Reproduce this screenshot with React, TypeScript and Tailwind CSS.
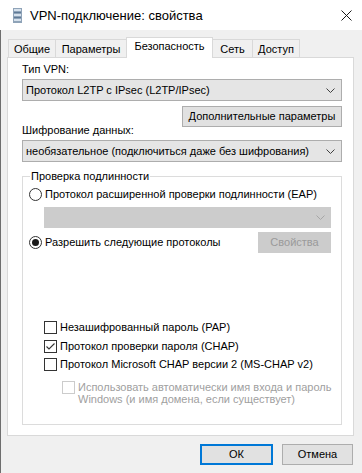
import React from "react";

function Chevron({ color = "#404040" }: { color?: string }) {
  return (
    <svg width="9" height="5" viewBox="0 0 9 5">
      <path d="M0.5 0.5 L4.5 4.5 L8.5 0.5" fill="none" stroke={color} strokeWidth="1" />
    </svg>
  );
}

function Combo({ text, disabled }: { text?: string; disabled?: boolean }) {
  return (
    <div
      className={
        disabled
          ? "flex h-[21px] items-center justify-end border border-[#cccccc] bg-[#cccccc] pr-[5px]"
          : "flex h-[22px] items-center justify-between border border-[#adadad] bg-[#e5e5e5] pl-[3px] pr-[6px]"
      }
    >
      {text && <span className="whitespace-nowrap">{text}</span>}
      <Chevron color={disabled ? "#a6a6a6" : "#404040"} />
    </div>
  );
}

function Radio({ checked }: { checked?: boolean }) {
  return (
    <span className="flex h-[13px] w-[13px] shrink-0 items-center justify-center rounded-full border border-[#333333] bg-white">
      {checked && <span className="h-[7px] w-[7px] rounded-full bg-[#1a1a1a]" />}
    </span>
  );
}

function Check({ checked, disabled }: { checked?: boolean; disabled?: boolean }) {
  return (
    <span
      className={
        disabled
          ? "flex h-[13px] w-[13px] shrink-0 border border-[#cccccc] bg-white"
          : "flex h-[13px] w-[13px] shrink-0 items-center justify-center border border-[#333333] bg-white"
      }
    >
      {checked && (
        <svg width="11" height="11" viewBox="0 0 11 11">
          <path d="M1.5 5.5 L4 8 L9.5 2.5" fill="none" stroke="#333333" strokeWidth="1.1" />
        </svg>
      )}
    </span>
  );
}

function Tab({ label, w, active }: { label: string; w: string; active?: boolean }) {
  if (active) {
    return (
      <div className={`relative z-10 -mb-px -ml-px flex h-[21px] justify-center whitespace-nowrap border border-b-0 border-[#d9d9d9] bg-white pt-[1px] ${w}`}>
        {label}
      </div>
    );
  }
  return (
    <div className={`-ml-px flex h-[18px] justify-center whitespace-nowrap border border-b-0 border-[#d9d9d9] bg-[#f0f0f0] pt-[2px] first:ml-0 ${w}`}>
      {label}
    </div>
  );
}

export default function App() {
  return (
    <div className="h-[473px] w-[362px] overflow-hidden bg-[#f0f0f0] font-['Liberation_Sans',Arial,sans-serif] text-[11px] leading-[15px] text-black">
      {/* title bar */}
      <div className="flex h-[30px] items-center bg-white pl-[13px]">
        <svg width="9" height="15" viewBox="0 0 9 15">
          <rect x="0" y="0" width="9" height="15" fill="#8fa3b8" />
          <rect x="1" y="1" width="7" height="2" fill="#d6e1ec" />
          <rect x="1" y="4" width="7" height="1" fill="#5f7a96" />
          <rect x="1" y="6" width="7" height="2" fill="#d6e1ec" />
          <rect x="1" y="9" width="7" height="1" fill="#5f7a96" />
          <rect x="1" y="11" width="7" height="2" fill="#d6e1ec" />
        </svg>
        <span className="ml-[8px] text-[13px]">VPN-подключение: свойства</span>
        <svg className="ml-auto mr-[10px]" width="11" height="11" viewBox="0 0 11 11">
          <path d="M0.5 0.5 L10.5 10.5 M10.5 0.5 L0.5 10.5" stroke="#1a1a1a" strokeWidth="1" />
        </svg>
      </div>

      {/* body */}
      <div className="flex h-[443px] flex-col border-l border-[#6e6e6e] pl-[6px] pr-[8px]">
        <div className="ml-[1px] mt-[7px] flex h-[20px] items-end">
          <Tab label="Общие" w="w-[48px]" />
          <Tab label="Параметры" w="w-[72px]" />
          <Tab label="Безопасность" w="w-[87px]" active />
          <Tab label="Сеть" w="w-[41px]" />
          <Tab label="Доступ" w="w-[48px]" />
        </div>

        <div className="flex h-[379px] flex-col border border-[#d9d9d9] bg-white pb-[10px] pl-[14px] pr-[11px]">
          <div className="mt-[4px]">Тип VPN:</div>
          <div className="mt-[2px]">
            <Combo text="Протокол L2TP с IPsec (L2TP/IPsec)" />
          </div>
          <div className="mt-[5px] flex justify-end">
            <div className="flex h-[21px] w-[160px] items-center justify-center whitespace-nowrap border border-[#adadad] bg-[#e1e1e1]">
              Дополнительные параметры
            </div>
          </div>
          <div className="-mt-[4px]">Шифрование данных:</div>
          <div className="mt-[2px]">
            <Combo text="необязательное (подключиться даже без шифрования)" />
          </div>

          <div className="relative mt-[14px] flex flex-1 flex-col border border-[#dcdcdc]">
            <span className="absolute -top-[8px] left-[7px] bg-white px-[1px]">Проверка подлинности</span>

            <div className="mt-[10px] flex h-[15px] items-center gap-[3px] whitespace-nowrap pl-[6px]">
              <Radio />
              <span>Протокол расширенной проверки подлинности (EAP)</span>
            </div>
            <div className="ml-[21px] mr-[10px] mt-[5px]">
              <Combo disabled />
            </div>
            <div className="mr-[10px] mt-[4px] flex h-[21px] items-center pl-[6px]">
              <Radio checked />
              <span className="ml-[3px]">Разрешить следующие протоколы</span>
              <div className="ml-auto flex h-[21px] w-[73px] items-center justify-center border border-[#cccccc] bg-[#cccccc] text-[#9a9a9a]">
                Свойства
              </div>
            </div>

            <div className="mt-[65px] flex h-[19px] items-center gap-[3px] pl-[21px]">
              <Check />
              <span>Незашифрованный пароль (PAP)</span>
            </div>
            <div className="flex h-[18px] items-center gap-[3px] pl-[21px]">
              <Check checked />
              <span>Протокол проверки пароля (CHAP)</span>
            </div>
            <div className="flex h-[19px] items-center gap-[3px] pl-[21px]">
              <Check />
              <span>Протокол Microsoft CHAP версии 2 (MS-CHAP v2)</span>
            </div>
            <div className="mt-[7px] flex items-start gap-[3px] pl-[39px]">
              <Check disabled />
              <span className="whitespace-nowrap leading-[12px] text-[#a0a0a0]">
                Использовать автоматически имя входа и пароль
                <br />
                Windows (и имя домена, если существует)
              </span>
            </div>
          </div>
        </div>

        <div className="mt-[8px] flex justify-end gap-[9px] pr-[1px]">
          <div className="flex h-[21px] w-[73px] items-center justify-center border-2 border-[#0078d7] bg-[#e1e1e1]">
            ОК
          </div>
          <div className="flex h-[21px] w-[71px] items-center justify-center border border-[#adadad] bg-[#e1e1e1]">
            Отмена
          </div>
        </div>
      </div>
    </div>
  );
}
